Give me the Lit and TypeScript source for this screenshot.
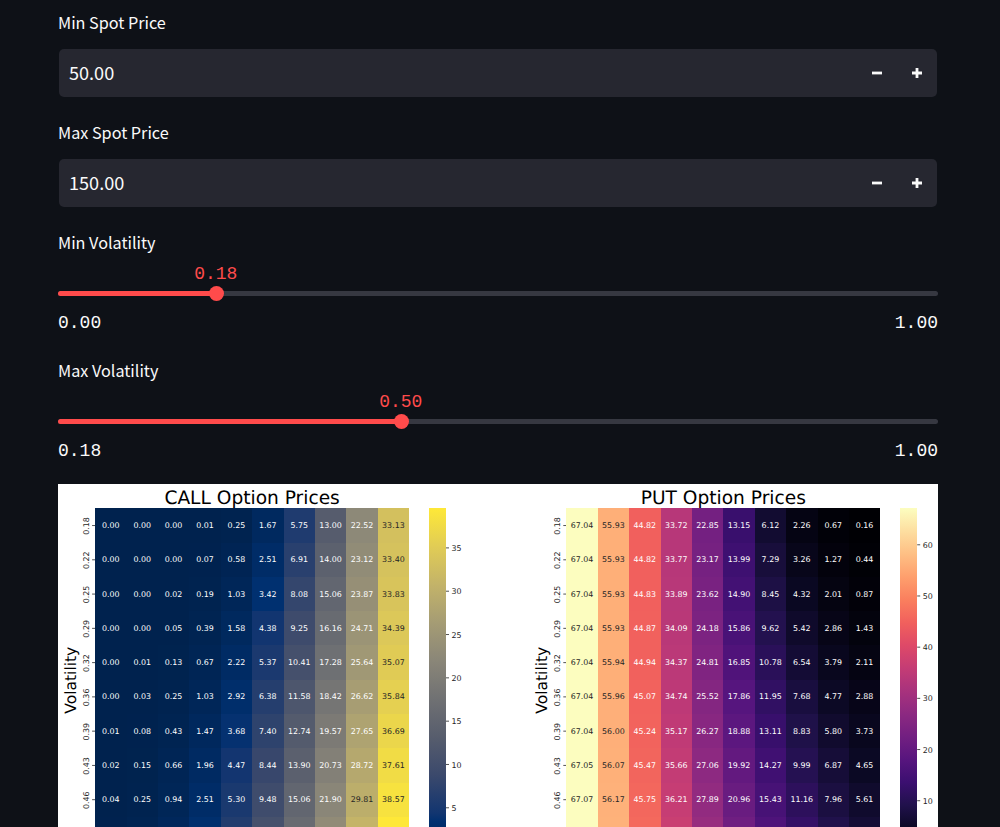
import { LitElement, html, svg, css } from "lit";
import { customElement, property } from "lit/decorators.js";

type Stop = [number, string];

const CIVIDIS: Stop[] = [
  [0, "#00224e"], [0.086, "#003070"], [1 / 9, "#123570"], [2 / 9, "#3b496c"],
  [3 / 9, "#575d6d"], [4 / 9, "#707173"], [5 / 9, "#8a8678"], [6 / 9, "#a59c74"],
  [7 / 9, "#c3b369"], [8 / 9, "#e1cc55"], [1, "#fee838"],
];

const MAGMA: Stop[] = [
  "#000004", "#0b0924", "#20114b", "#3b0f70", "#57157e", "#721f81", "#8c2981", "#a8327d",
  "#c43c75", "#de4968", "#f1605d", "#fa7f5e", "#fe9f6d", "#febf84", "#fddea0", "#fcfdbf",
].map((c, i) => [i / 15, c] as Stop);

const rgb = (hex: string) => [1, 3, 5].map((i) => parseInt(hex.slice(i, i + 2), 16));

function sample(map: Stop[], t: number): string {
  const v = Math.min(1, Math.max(0, t));
  let i = 1;
  while (i < map.length - 1 && map[i][0] < v) i++;
  const [a, ca] = map[i - 1];
  const [b, cb] = map[i];
  const f = (v - a) / (b - a);
  const x = rgb(ca);
  const y = rgb(cb);
  return `rgb(${x.map((n, k) => Math.round(n + (y[k] - n) * f)).join(",")})`;
}

interface Chart {
  id: string;
  title: string;
  left: number;
  map: Stop[];
  min: number;
  max: number;
  darkFrom: number;
  ticks: number[];
  rows: string[];
}

const VOLS = ["0.18", "0.22", "0.25", "0.29", "0.32", "0.36", "0.39", "0.43", "0.46", "0.50"];

const CHARTS: Chart[] = [
  {
    id: "call", title: "CALL Option Prices", left: 37.1, map: CIVIDIS, min: 0, max: 39.56, darkFrom: 29.5,
    ticks: [35, 30, 25, 20, 15, 10, 5],
    rows: [
      "0.00 0.00 0.00 0.01 0.25 1.67 5.75 13.00 22.52 33.13",
      "0.00 0.00 0.00 0.07 0.58 2.51 6.91 14.00 23.12 33.40",
      "0.00 0.00 0.02 0.19 1.03 3.42 8.08 15.06 23.87 33.83",
      "0.00 0.00 0.05 0.39 1.58 4.38 9.25 16.16 24.71 34.39",
      "0.00 0.01 0.13 0.67 2.22 5.37 10.41 17.28 25.64 35.07",
      "0.00 0.03 0.25 1.03 2.92 6.38 11.58 18.42 26.62 35.84",
      "0.01 0.08 0.43 1.47 3.68 7.40 12.74 19.57 27.65 36.69",
      "0.02 0.15 0.66 1.96 4.47 8.44 13.90 20.73 28.72 37.61",
      "0.04 0.25 0.94 2.51 5.30 9.48 15.06 21.90 29.81 38.57",
      "0.08 0.39 1.28 3.11 6.15 10.53 16.22 23.07 30.93 39.56",
    ],
  },
  {
    id: "put", title: "PUT Option Prices", left: 508.3, map: MAGMA, min: 0.16, max: 67.11, darkFrom: 50,
    ticks: [60, 50, 40, 30, 20, 10],
    rows: [
      "67.04 55.93 44.82 33.72 22.85 13.15 6.12 2.26 0.67 0.16",
      "67.04 55.93 44.82 33.77 23.17 13.99 7.29 3.26 1.27 0.44",
      "67.04 55.93 44.83 33.89 23.62 14.90 8.45 4.32 2.01 0.87",
      "67.04 55.93 44.87 34.09 24.18 15.86 9.62 5.42 2.86 1.43",
      "67.04 55.94 44.94 34.37 24.81 16.85 10.78 6.54 3.79 2.11",
      "67.04 55.96 45.07 34.74 25.52 17.86 11.95 7.68 4.77 2.88",
      "67.04 56.00 45.24 35.17 26.27 18.88 13.11 8.83 5.80 3.73",
      "67.05 56.07 45.47 35.66 27.06 19.92 14.27 9.99 6.87 4.65",
      "67.07 56.17 45.75 36.21 27.89 20.96 15.43 11.16 7.96 5.61",
      "67.11 56.31 46.09 36.81 28.74 22.01 16.60 12.33 9.08 6.60",
    ],
  },
];

const TOP = 24.4;
const CELL_W = 31.4;
const CELL_H = 34.27;
const PLOT_H = CELL_H * 10;
const VIEW_H = 343;

@customElement("number-field")
export class NumberField extends LitElement {
  @property() label = "";
  @property() value = "";

  static styles = css`
    :host { display: block; height: 110px; }
    .label { height: 33px; line-height: 28px; font-size: 16.2px; padding-top: 8px; box-sizing: border-box; }
    .box {
      display: flex; align-items: center; height: 48px; margin: 16px 1px 0; border-radius: 5px;
      background: #262730; box-sizing: border-box; padding-left: 10px;
    }
    .value { flex: 1; font-size: 18.1px; line-height: 46px; height: 48px; }
    .step { width: 40px; height: 48px; display: flex; align-items: center; justify-content: center; }
    svg { display: block; }
  `;

  render() {
    return html`
      <div class="label">${this.label}</div>
      <div class="box">
        <div class="value">${this.value}</div>
        <div class="step"><svg width="10" height="10"><path d="M0 5H10" stroke="#fafafa" stroke-width="2.8" /></svg></div>
        <div class="step"><svg width="10" height="10"><path d="M0 5H10M5 0V10" stroke="#fafafa" stroke-width="2.8" /></svg></div>
      </div>
    `;
  }
}

@customElement("range-slider")
export class RangeSlider extends LitElement {
  @property() label = "";
  @property() value = "";
  @property() min = "";
  @property() max = "";
  @property({ type: Number }) pos = 0;

  static styles = css`
    :host { display: block; height: 128px; }
    .label { height: 42px; line-height: 28px; font-size: 16.2px; padding-top: 8px; box-sizing: border-box; }
    .mono { font: 18px/22px "Liberation Mono", monospace; }
    .track { position: relative; height: 5px; margin-top: 29px; border-radius: 3px; background: #363841; }
    .fill { height: 5px; border-radius: 3px 0 0 3px; background: #ff4b4b; }
    .thumb {
      position: absolute; top: -5px; width: 15px; height: 15px; margin-left: -7.5px;
      border-radius: 50%; background: #ff4b4b;
    }
    .value { position: absolute; top: -28px; width: 60px; margin-left: -30.6px; text-align: center; color: #ff4b4b; }
    .ends { display: flex; justify-content: space-between; padding-top: 16px; }
  `;

  render() {
    return html`
      <div class="label">${this.label}</div>
      <div class="track">
        <div class="fill" style="width:${this.pos}px"></div>
        <div class="thumb" style="left:${this.pos}px"></div>
        <div class="value mono" style="left:${this.pos}px">${this.value}</div>
      </div>
      <div class="ends mono"><span>${this.min}</span><span>${this.max}</span></div>
    `;
  }
}

@customElement("price-heatmaps")
export class PriceHeatmaps extends LitElement {
  static styles = css`
    :host { display: block; background: #fff; }
    svg { display: block; font-family: "DejaVu Sans", sans-serif; text-rendering: geometricPrecision; }
    rect { shape-rendering: crispEdges; }
    .title { font-size: 18.6px; fill: #000; text-anchor: middle; }
    .axis { font-size: 15.5px; fill: #000; text-anchor: middle; }
    .tick { font-size: 7.9px; fill: #262626; }
    .mid { text-anchor: middle; }
    .cell { font-size: 7.9px; fill: #fff; text-anchor: middle; }
    .dark { fill: #262626; }
    .mark { stroke: #262626; stroke-width: 0.8; }
  `;

  private chart(c: Chart) {
    const bar = c.left + 333.9;
    return svg`
      <defs>
        <linearGradient id=${c.id} x1="0" y1="1" x2="0" y2="0">
          ${c.map.map(([o, col]) => svg`<stop offset=${o} stop-color=${col} />`)}
        </linearGradient>
      </defs>
      <text class="title" x=${c.left + 157} y="19.6">${c.title}</text>
      <text class="axis" transform="translate(${c.left - 19.4} 196.2) rotate(-90)">Volatility</text>
      ${c.rows.map((row, r) => {
        const y = TOP + r * CELL_H;
        const mid = y + CELL_H / 2;
        // Labels of a row whose centre is below the visible area are left out.
        const labelled = mid < VIEW_H - 5;
        return svg`
          ${labelled ? svg`
            <line class="mark" x1=${c.left - 3} x2=${c.left} y1=${mid} y2=${mid} />
            <text class="tick mid" transform="translate(${c.left - 6.6} ${mid + 0.5}) rotate(-90)">${VOLS[r]}</text>` : ""}
          ${row.split(" ").map((v, k) => {
            const n = Number(v);
            const x = c.left + k * CELL_W;
            return svg`
              <rect x=${x} y=${y} width=${CELL_W} height=${CELL_H}
                fill=${sample(c.map, (n - c.min) / (c.max - c.min))} />
              ${labelled ? svg`<text class="cell ${n > c.darkFrom ? "dark" : ""}" x=${x + CELL_W / 2} y=${mid + 2.6}>${v}</text>` : ""}`;
          })}`;
      })}
      <rect x=${bar} y=${TOP} width="17" height=${PLOT_H} fill="url(#${c.id})" />
      ${c.ticks.map((t) => {
        const y = TOP + (1 - (t - c.min) / (c.max - c.min)) * PLOT_H;
        return svg`
          <line class="mark" x1=${bar + 17} x2=${bar + 20} y1=${y} y2=${y} />
          <text class="tick" x=${bar + 22.5} y=${y + 3.1}>${t}</text>`;
      })}
    `;
  }

  render() {
    return html`<svg width="880" height=${VIEW_H} viewBox="0 0 880 343">${CHARTS.map((c) => this.chart(c))}</svg>`;
  }
}

@customElement("app-root")
export class AppRoot extends LitElement {
  static styles = css`
    :host {
      display: block; height: 827px; overflow: hidden; box-sizing: border-box; padding: 0 62px 0 58px;
      background: #0e1117; color: #fafafa;
      font-family: "Noto Sans CJK SC", sans-serif;
    }
    .plots { margin-top: 8px; }
  `;

  render() {
    return html`
      <number-field label="Min Spot Price" value="50.00"></number-field>
      <number-field label="Max Spot Price" value="150.00"></number-field>
      <range-slider label="Min Volatility" value="0.18" min="0.00" max="1.00" pos="158.4"></range-slider>
      <range-slider label="Max Volatility" value="0.50" min="0.18" max="1.00" pos="343.4"></range-slider>
      <price-heatmaps class="plots"></price-heatmaps>
    `;
  }
}
